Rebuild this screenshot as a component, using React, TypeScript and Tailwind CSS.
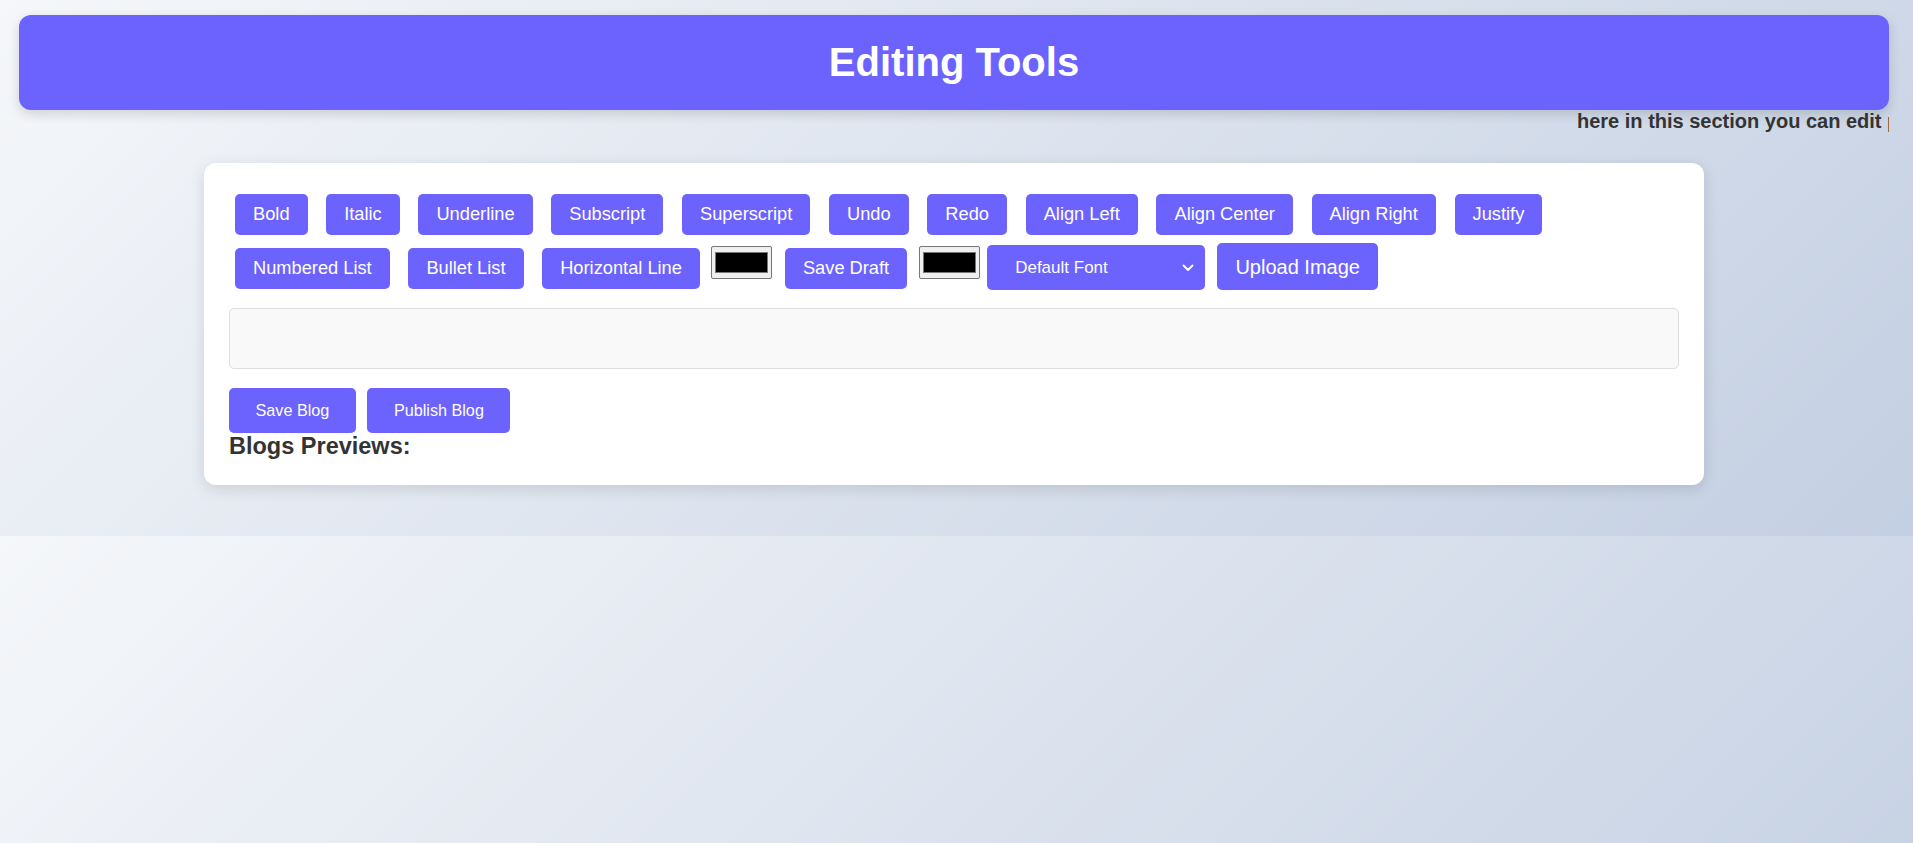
import React from "react";

const Btn = ({ children, className = "" }: { children: React.ReactNode; className?: string }) => (
  <button
    className={
      "h-[41px] px-[18px] rounded-[5px] bg-[#6c63ff] text-white text-[18.25px] leading-none whitespace-nowrap shrink-0 " +
      className
    }
  >
    {children}
  </button>
);

const ColorSwatch = ({ className = "" }: { className?: string }) => (
  <div
    className={
      "w-[61px] h-[33px] shrink-0 rounded-[2px] border border-[#767676] bg-[#efefef] px-[3px] py-[5px] " + className
    }
  >
    <div className="w-full h-full bg-black border border-[#777]" />
  </div>
);

export default function App() {
  return (
    <div className="h-[843px] w-full overflow-hidden bg-[linear-gradient(135deg,#f5f7fa_0%,#c3cfe2_100%)] bg-[length:100%_536px] bg-repeat font-['Liberation_Sans',Arial,sans-serif]">
      <div className="h-[536px] w-[1889px] pl-[19px] pt-[15px]">
        <header className="h-[95px] rounded-[12px] bg-[#6c63ff] shadow-[0_4px_12px_rgba(0,0,0,0.15)] flex items-center justify-center">
          <h1 className="text-white font-bold text-[40px] leading-none pb-[2px]">Editing Tools</h1>
        </header>
        <div className="h-[23px] overflow-hidden whitespace-nowrap">
          <span className="inline-block ml-[1558px] text-[20px] leading-[23px] font-bold text-[#333]">
            here in this section you can edit paragraphs and more
          </span>
        </div>
        <main className="mt-[30px] mx-auto w-[1500px] rounded-[12px] bg-white p-[25px] shadow-[0_4px_15px_rgba(0,0,0,0.12)]">
          <div className="ml-[6px] mt-[6px] flex gap-[18.7px]">
            <Btn>Bold</Btn>
            <Btn>Italic</Btn>
            <Btn>Underline</Btn>
            <Btn>Subscript</Btn>
            <Btn>Superscript</Btn>
            <Btn>Undo</Btn>
            <Btn>Redo</Btn>
            <Btn>Align Left</Btn>
            <Btn>Align Center</Btn>
            <Btn>Align Right</Btn>
            <Btn>Justify</Btn>
          </div>
          <div className="ml-[6px] mt-[8px] flex items-start h-[47px]">
            <Btn className="mt-[5px]">Numbered List</Btn>
            <Btn className="mt-[5px] ml-[18.7px]">Bullet List</Btn>
            <Btn className="mt-[5px] ml-[18.7px]">Horizontal Line</Btn>
            <ColorSwatch className="mt-[3px] ml-[11px]" />
            <Btn className="mt-[5px] ml-[13px]">Save Draft</Btn>
            <ColorSwatch className="mt-[3px] ml-[12px]" />
            <div className="mt-[2px] ml-[7px] w-[218px] h-[45px] shrink-0 rounded-[5px] bg-[#6c63ff] text-white text-[17px] flex items-center pl-[28px] pr-[11px]">
              <span className="flex-1">Default Font</span>
              <svg width="12" height="8" viewBox="0 0 12 8" fill="none">
                <path d="M1.5 1.5 L6 6 L10.5 1.5" stroke="white" strokeWidth="1.8" strokeLinecap="round" strokeLinejoin="round" />
              </svg>
            </div>
            <button className="ml-[12px] w-[161px] h-[47px] shrink-0 rounded-[5px] bg-[#6c63ff] text-white text-[20px] leading-none whitespace-nowrap">
              Upload Image
            </button>
          </div>
          <div className="mt-[18px] h-[61px] rounded-[5px] border border-[#ddd] bg-[#f9f9f9]" />
          <div className="mt-[19px] flex">
            <button className="h-[45px] px-[26.5px] rounded-[5px] bg-[#6c63ff] text-white text-[16.2px] leading-none">Save Blog</button>
            <button className="ml-[11.6px] h-[45px] px-[26.5px] rounded-[5px] bg-[#6c63ff] text-white text-[16.2px] leading-none">
              Publish Blog
            </button>
          </div>
          <h3 className="text-[23.5px] leading-[26.5px] font-bold text-[#333]">Blogs Previews:</h3>
        </main>
      </div>
    </div>
  );
}
